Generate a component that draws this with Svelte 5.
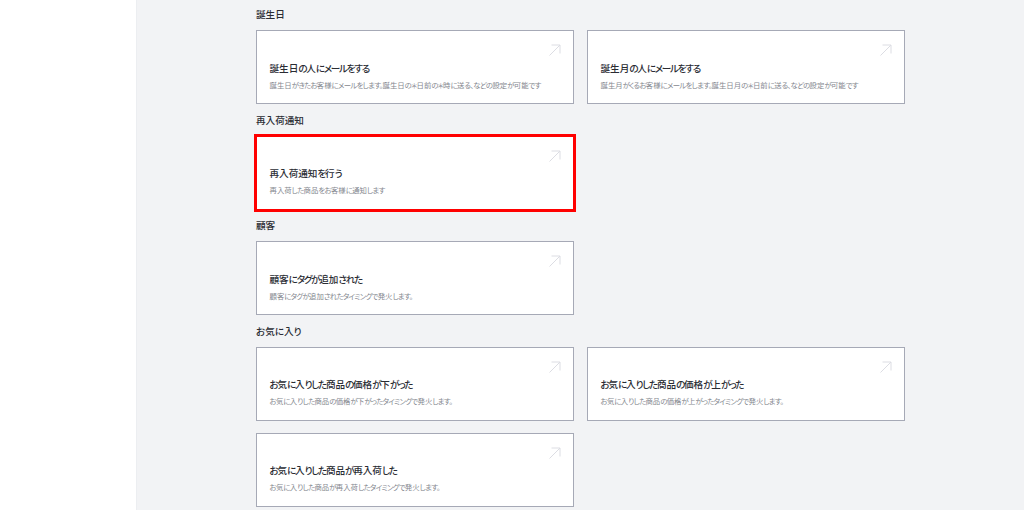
<script>
  const sections = [
    {
      title: '誕生日',
      cards: [
        { title: '誕生日の人にメールをする', desc: '誕生日がきたお客様にメールをします。誕生日の＊日前の＊時に送る、などの設定が可能です' },
        { title: '誕生月の人にメールをする', desc: '誕生月がくるお客様にメールをします。誕生日月の＊日前に送る、などの設定が可能です' }
      ]
    },
    {
      title: '再入荷通知',
      cards: [{ title: '再入荷通知を行う', desc: '再入荷した商品をお客様に通知します', marked: true }]
    },
    {
      title: '顧客',
      cards: [{ title: '顧客にタグが追加された', desc: '顧客にタグが追加されたタイミングで発火します。' }]
    },
    {
      title: 'お気に入り',
      cards: [
        { title: 'お気に入りした商品の価格が下がった', desc: 'お気に入りした商品の価格が下がったタイミングで発火します。' },
        { title: 'お気に入りした商品の価格が上がった', desc: 'お気に入りした商品の価格が上がったタイミングで発火します。' },
        { title: 'お気に入りした商品が再入荷した', desc: 'お気に入りした商品が再入荷したタイミングで発火します。' }
      ]
    }
  ];

  // the kana sit tighter than the kanji, so they get their own runs
  const runs = (text) => text.split(/([\u4e00-\u9fff]+)/).filter(Boolean);
  const isKanji = (run) => /[\u4e00-\u9fff]/.test(run);
</script>

<div class="page">
  <aside class="sidebar"></aside>
  <main class="content">
    {#each sections as section}
      <section class="section">
        <h2 class="heading">{section.title}</h2>
        <div class="grid">
          {#each section.cards as card}
            <a class="card" class:marked={card.marked} href="#top">
              <svg class="arrow" viewBox="0 0 12 12" width="12" height="12" fill="none" stroke="#dcdde3" stroke-width="1">
                <path d="M0.5 11.5 L11 1 M2.5 1 H11 V9.5" />
              </svg>
              <div class="card-title">{#each runs(card.title) as run}<span class:kana={!isKanji(run)}>{run}</span>{/each}</div>
              <div class="card-desc">{#each runs(card.desc) as run}<span class:kana={!isKanji(run)}>{run}</span>{/each}</div>
            </a>
          {/each}
        </div>
      </section>
    {/each}
  </main>
</div>

<style>
  :global(body) {
    overflow: hidden;
    background: #fff;
  }

  .page {
    display: flex;
    height: 510px;
    overflow: hidden;
    font-family: "Noto Sans CJK JP", "Noto Sans", sans-serif;
    font-feature-settings: "palt";
  }

  .sidebar {
    width: 136px;
    flex-shrink: 0;
    background: #fff;
    border-right: 1px solid #eceef1;
  }

  .content {
    flex: 1;
    background: #f2f3f5;
    padding: 7px 0 0 119px;
  }

  .section {
    margin-bottom: 8.67px;
  }

  .heading {
    margin: 0 0 9px;
    height: 14px;
    line-height: 14px;
    font-size: 9.6px;
    font-weight: 500;
    color: #2a2c33;
  }

  .grid {
    display: grid;
    grid-template-columns: 318px 318px;
    gap: 12px 13px;
  }

  .card {
    position: relative;
    display: block;
    box-sizing: border-box;
    height: 74px;
    padding: 30.5px 12.5px 0;
    background: #fff;
    border: 1px solid #a6a9b6;
    text-decoration: none;
  }

  .marked {
    border-color: #fff;
    outline: 3px solid #f00;
    outline-offset: -1.5px;
  }

  .arrow {
    position: absolute;
    top: 13px;
    right: 12.5px;
  }

  .card-title {
    font-size: 9.6px;
    font-weight: 500;
    line-height: 13px;
    color: #2a2c33;
  }

  .card-title .kana {
    letter-spacing: -1.3px;
  }

  .card-desc {
    margin-top: 4px;
    font-size: 7.4px;
    line-height: 11px;
    color: #85888f;
  }

  .card-desc .kana {
    letter-spacing: -0.7px;
  }
</style>
